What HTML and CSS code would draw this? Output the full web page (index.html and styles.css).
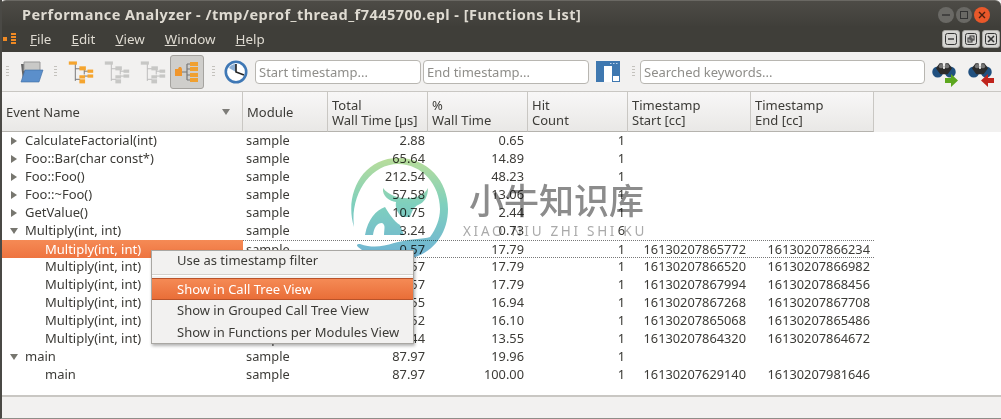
FILE: index.html
```html
<!DOCTYPE html>
<html lang="en">
<head>
  <meta charset="UTF-8" />
  <title>Performance Analyzer</title>
  <link rel="stylesheet" href="styles.css">
</head>
<body>

  <svg class="defs" width="0" height="0">
    <defs>
      <symbol id="tree" viewBox="0 0 32 32">
        <path d="M9 6V27M9 12H15M9 25H15M20 12V19M20 15H26M20 21H26" fill="none" stroke="currentColor" stroke-width="1.2" />
        <rect x="1" y="3" width="10" height="4" fill="var(--a)" />
        <rect x="14" y="9" width="8" height="5" fill="var(--a)" />
        <rect x="24" y="13" width="7" height="4" fill="var(--b)" />
        <rect x="24" y="19" width="7" height="4" fill="var(--b)" />
        <rect x="14" y="20" width="7" height="4" fill="var(--b)" />
        <rect x="14" y="25" width="7" height="5" fill="var(--a)" />
      </symbol>
      <symbol id="binoculars" viewBox="0 0 32 30">
        <circle cx="7.5" cy="15" r="7.5" fill="#20507f" />
        <circle cx="24.5" cy="15" r="7.5" fill="#20507f" />
        <path d="M5 10 10 3H14L15 11H17L18 3H22L27 10 21 18H11Z" fill="#2b2b2b" />
        <circle cx="12" cy="7" r="3" fill="#777" />
        <circle cx="20" cy="7" r="3" fill="#777" />
      </symbol>
    </defs>
  </svg>

  <div class="window">

    <div class="titlebar">
      <div class="title">Performance Analyzer - /tmp/eprof_thread_f7445700.epl - [Functions List]</div>
      <div class="wm-buttons">
        <span class="wm-btn"><svg width="10" height="10"><path d="M1 5H9" stroke="#333" stroke-width="1.4" /></svg></span>
        <span class="wm-btn"><svg width="10" height="10"><rect x="1.5" y="1.5" width="7" height="7" fill="none" stroke="#333" /></svg></span>
        <span class="wm-btn wm-close"><svg width="10" height="10"><path d="M2 2 8 8M8 2 2 8" stroke="#4a2010" stroke-width="1.4" /></svg></span>
      </div>
    </div>

    <div class="menubar">
      <svg class="app-icon" width="16" height="14">
        <rect x="2" y="5" width="4" height="4" fill="#f08a24" />
        <path d="M10 2H15M10 5H15M10 8H15M10 11H15" stroke="#f08a24" stroke-width="2" />
      </svg>
      <ul class="menu-list">
        <li><u>F</u>ile</li>
        <li><u>E</u>dit</li>
        <li><u>V</u>iew</li>
        <li><u>W</u>indow</li>
        <li><u>H</u>elp</li>
      </ul>
      <div class="mdi-buttons">
        <span class="mdi-btn"><svg width="12" height="12"><rect x=".5" y=".5" width="11" height="11" rx="2" fill="none" stroke="#333" /><path d="M3 6H9" stroke="#333" stroke-width="1.4" /></svg></span>
        <span class="mdi-btn"><svg width="12" height="12"><rect x=".5" y=".5" width="11" height="11" rx="2" fill="none" stroke="#333" /><rect x="5" y="3" width="4" height="4" fill="none" stroke="#333" /><rect x="3" y="5" width="4" height="4" fill="none" stroke="#333" /></svg></span>
        <span class="mdi-btn"><svg width="12" height="12"><rect x=".5" y=".5" width="11" height="11" rx="2" fill="none" stroke="#333" /><path d="M3 3 9 9M9 3 3 9" stroke="#333" stroke-width="1.6" /></svg></span>
      </div>
    </div>

    <div class="toolbar">
      <span class="grip grip-first"></span>
      <svg class="tool-open" width="26" height="22" viewBox="0 0 26 22">
        <path d="M3 3 5 20H9L7 3Z" fill="#666" />
        <path d="M6 1H22V10H6Z" fill="#c9c9c7" stroke="#999" />
        <path d="M7 9H25L21 21H3Z" fill="#5b8fcb" stroke="#3e6ca3" stroke-width=".6" />
      </svg>
      <span class="grip grip-open"></span>
      <svg class="tool-tree tool-t1" width="26" height="26"><use href="#tree" /></svg>
      <svg class="tool-tree tool-off tool-t2" width="26" height="26"><use href="#tree" /></svg>
      <svg class="tool-tree tool-off tool-t3" width="26" height="26"><use href="#tree" /></svg>
      <span class="tool-active">
        <svg width="26" height="24" viewBox="0 0 26 24">
          <path d="M8 12H13M13 4V20M13 4H16M13 9H16M13 15H16M13 20H16" fill="none" stroke="#777" stroke-width="1.2" />
          <path d="M1 9H4L5 7H7L8 9V16H1Z" fill="#f0962c" />
          <path d="M16 2H24V6H16ZM16 7H24V11H16ZM16 13H24V17H16ZM16 18H24V22H16Z" fill="#f0a030" />
        </svg>
      </span>
      <span class="grip grip-clock"></span>
      <svg class="tool-clock" width="24" height="24">
        <circle cx="12" cy="12" r="10.2" fill="#fff" stroke="#3f78b5" stroke-width="2.6" />
        <path d="M12 12V4A8 8 0 0 0 5 8Z" fill="#3f78b5" opacity=".6" />
        <path d="M12 4V12L20 15" fill="none" stroke="#222" stroke-width="1.6" />
      </svg>
      <input class="field field-start" placeholder="Start timestamp..." />
      <input class="field field-end" placeholder="End timestamp..." />
      <svg class="tool-window" width="24" height="21">
        <rect width="24" height="21" fill="#3f78b0" />
        <rect x="8" y="5" width="8" height="16" fill="#fff" />
        <rect x="17" y="15" width="6" height="5" fill="#fff" />
        <path d="M14 2.5H22" stroke="#bcd3ea" stroke-dasharray="1.5 1.5" />
      </svg>
      <span class="grip grip-search"></span>
      <input class="field field-search" placeholder="Searched keywords..." />
      <span class="find find-next">
        <svg width="24" height="22"><use href="#binoculars" /></svg>
        <svg class="find-arrow" width="13" height="13"><path d="M0 4H6V0L13 6.5 6 13V9H0Z" fill="#5da71f" /></svg>
      </span>
      <span class="find find-prev">
        <svg width="24" height="22"><use href="#binoculars" /></svg>
        <svg class="find-arrow" width="13" height="13"><path d="M13 4H7V0L0 6.5 7 13V9H13Z" fill="#c0241c" /></svg>
      </span>
    </div>

    <div class="table">
      <div class="head">
        <div class="hcell hcell-name">Event Name<span class="sort"></span></div>
        <div class="hcell hcell-name">Module</div>
        <div class="hcell">Total<br>Wall Time [µs]</div>
        <div class="hcell">%<br>Wall Time</div>
        <div class="hcell">Hit<br>Count</div>
        <div class="hcell">Timestamp<br>Start [cc]</div>
        <div class="hcell">Timestamp<br>End [cc]</div>
      </div>
      <div id="rows"></div>
    </div>

    <div class="statusbar"></div>

    <div class="watermark">
      <svg width="110" height="110" viewBox="0 0 110 110">
        <defs>
          <linearGradient id="wm" gradientUnits="userSpaceOnUse" x1="0" y1="3" x2="0" y2="105">
            <stop offset="0" stop-color="#b9dd9a" />
            <stop offset=".45" stop-color="#7fd0bd" />
            <stop offset="1" stop-color="#6fb2d6" />
          </linearGradient>
        </defs>
        <path fill="url(#wm)" fill-rule="evenodd" d="M14 72C4 40 22 3 58 3 88 3 108 26 108 54 108 84 86 105 58 105 42 105 28 100 18 92 16 90 17 89 20 89 32 93 42 92 54 88 68 84 84 84 90 82 96 74 100 64 100 54 100 30 82 9 58 9 30 9 10 40 14 72Z" />
        <path fill="url(#wm)" d="M43 33C42 42 50 46 56 47 55 52 57 58 62 62L70 62C72 56 74 52 78 50 84 48 88 42 88 33 84 40 78 42 72 43 62 44 50 42 43 33Z" />
        <path fill="url(#wm)" d="M25 80C28 64 36 55 45 52 50 60 54 66 60 70L64 80H44C44 74 46 70 42 68 36 68 34 74 33 80Z" />
      </svg>
      <div class="wm-text">
        <div class="wm-cn">小牛知识库</div>
        <div class="wm-en">XIAO NIU ZHI SHI KU</div>
      </div>
    </div>

    <div class="context-menu">
      <div class="cm-item cm-first">Use as timestamp filter</div>
      <div class="cm-sep"></div>
      <div class="cm-item cm-active">Show in Call Tree View</div>
      <div class="cm-item">Show in Grouped Call Tree View</div>
      <div class="cm-item">Show in Functions per Modules View</div>
    </div>

  </div>

  <script>
    // name, level (0 = closed, 1 = open, 2 = child), total, percent, hits, start, end
    const data = [
      ['CalculateFactorial(int)', 0, '2.88', '0.65', '1', '', ''],
      ['Foo::Bar(char const*)', 0, '65.64', '14.89', '1', '', ''],
      ['Foo::Foo()', 0, '212.54', '48.23', '1', '', ''],
      ['Foo::~Foo()', 0, '57.58', '13.06', '1', '', ''],
      ['GetValue()', 0, '10.75', '2.44', '1', '', ''],
      ['Multiply(int, int)', 1, '3.24', '0.73', '6', '', ''],
      ['Multiply(int, int)', 2, '0.57', '17.79', '1', '16130207865772', '16130207866234'],
      ['Multiply(int, int)', 2, '0.57', '17.79', '1', '16130207866520', '16130207866982'],
      ['Multiply(int, int)', 2, '0.57', '17.79', '1', '16130207867994', '16130207868456'],
      ['Multiply(int, int)', 2, '0.55', '16.94', '1', '16130207867268', '16130207867708'],
      ['Multiply(int, int)', 2, '0.52', '16.10', '1', '16130207865068', '16130207865486'],
      ['Multiply(int, int)', 2, '0.44', '13.55', '1', '16130207864320', '16130207864672'],
      ['main', 1, '87.97', '19.96', '1', '', ''],
      ['main', 2, '87.97', '100.00', '1', '16130207629140', '16130207981646']
    ];

    const rows = document.getElementById('rows');

    data.forEach(function(item, index) {
      const row = document.createElement('div');
      row.className = index === 6 ? 'row row-selected' : 'row';

      const name = document.createElement('div');
      name.className = 'cell cell-name level-' + item[1];
      name.textContent = item[0];
      row.appendChild(name);

      const module = document.createElement('div');
      module.className = 'cell cell-module';
      module.textContent = 'sample';
      row.appendChild(module);

      for (let i = 2; i < 7; i++) {
        const cell = document.createElement('div');
        cell.className = 'cell cell-num';
        cell.textContent = item[i];
        row.appendChild(cell);
      }

      rows.appendChild(row);
    });
  </script>

</body>
</html>
```

FILE: styles.css
```css
* {
  box-sizing: border-box;
}
body {
  margin: 0;
  background: #fff;
  font-family: "Noto Sans", "Open Sans", sans-serif;
  font-size: 13px;
  color: #3c3b37;
  overflow: hidden;
}
.defs {
  position: absolute;
}
.window {
  position: relative;
  width: 1001px;
  height: 419px;
  border-left: 2px solid #4a4945;
  border-bottom: 1px solid #8f8d88;
  background: #f2f1f0;
  overflow: hidden;
}

/* title bar */
.titlebar {
  display: flex;
  align-items: center;
  height: 26px;
  margin-left: -2px;
  padding-left: 22px;
  background: linear-gradient(#4d4b46, #403f3a);
  border-top: 1px solid #6a6863;
  border-radius: 6px 6px 0 0;
}
.title {
  color: #dfdbd2;
  font-size: 14.5px;
  font-weight: bold;
  letter-spacing: .47px;
  white-space: nowrap;
}
.wm-buttons {
  display: flex;
  gap: 2px;
  margin-left: auto;
  margin-right: 11px;
  margin-top: 3px;
}
.wm-btn {
  display: flex;
  align-items: center;
  justify-content: center;
  width: 16px;
  height: 16px;
  border-radius: 50%;
  background: #6a6965;
}
.wm-close {
  background: #e9582a;
}

/* menu bar */
.menubar {
  display: flex;
  align-items: center;
  height: 26px;
  margin-left: -2px;
  background: #3f3e39;
}
.app-icon {
  margin-left: 1px;
}
.menu-list {
  display: flex;
  list-style: none;
  gap: 20px;
  margin: 0 0 0 13px;
  padding: 0;
  color: #dfdbd2;
  font-size: 13.4px;
}
.mdi-buttons {
  display: flex;
  gap: 2px;
  margin-left: auto;
  margin-right: 1px;
}
.mdi-btn {
  display: flex;
  align-items: center;
  justify-content: center;
  width: 18px;
  height: 18px;
  border-radius: 3px;
  background: #d6d5d2;
  border: 1px solid #a9a8a4;
}

/* toolbar */
.toolbar {
  display: flex;
  align-items: center;
  height: 40px;
  border-bottom: 1px solid #c9c7c3;
  background: #f2f1f0;
}
.grip {
  width: 3px;
  height: 11px;
  background: repeating-linear-gradient(#c4c2bd 0 1px, transparent 1px 3px);
}
.grip-first { margin-left: 4px; }
.tool-open { margin-left: 9px; }
.grip-open { margin-left: 10px; }
.tool-tree { --a: #f5a52f; --b: #f5a52f; color: #777; }
.tool-off { --a: #c7c7c5; --b: #c7c7c5; color: #bbb; }
.tool-t1 { margin-left: 11px; }
.tool-t2 { margin-left: 10px; }
.tool-t3 { margin-left: 10px; }
.tool-active {
  display: flex;
  align-items: center;
  justify-content: center;
  width: 34px;
  height: 34px;
  margin-left: 4px;
  background: #cfcecb;
  border: 1px solid #a5a39f;
  border-radius: 3px;
}
.grip-clock { margin-left: 8px; }
.tool-clock { margin-left: 9px; }
.field {
  height: 24px;
  padding: 0 3px;
  border: 1px solid #b8b6b1;
  border-radius: 4px;
  background: #fff;
  font-family: inherit;
  font-size: 13px;
}
.field::placeholder {
  color: #8f8e8a;
  opacity: 1;
}
.field-start { width: 166px; margin-left: 7px; }
.field-end { width: 166px; margin-left: 2px; }
.tool-window { margin-left: 7px; }
.grip-search { margin-left: 12px; }
.field-search { width: 285px; margin-left: 5px; }
.find {
  position: relative;
  width: 24px;
  height: 22px;
}
.find-next { margin-left: 7px; }
.find-prev { margin-left: 12px; }
.find-arrow {
  position: absolute;
  right: -2px;
  bottom: -4px;
}

/* table */
.table {
  height: 305px;
  background: #fff;
  border-bottom: 2px solid #c9c7c3;
}
.head,
.row {
  display: grid;
  grid-template-columns: 241px 85px 100px 100px 100px 123px 123px;
}
.head {
  height: 40px;
  background: #f2f1f0;
}
.hcell {
  position: relative;
  padding: 6px 0 0 4px;
  line-height: 15px;
  background: linear-gradient(#f8f7f7, #e9e8e6);
  border-right: 1px solid #c9c7c3;
  border-bottom: 1px solid #b5b3ae;
}
.hcell-name {
  padding-top: 13px;
}
.sort {
  position: absolute;
  right: 12px;
  top: 17px;
  border-style: solid;
  border-width: 6px 4px 0;
  border-color: #7d7c78 transparent transparent;
}
.row {
  height: 18px;
  line-height: 17px;
}
.cell {
  white-space: nowrap;
}
.cell-name {
  position: relative;
}
.cell-module {
  padding-left: 3px;
  font-size: 12.8px;
}
.cell-num {
  padding-right: 3px;
  font-size: 12.8px;
  text-align: right;
}
.cell-num:nth-child(4) { padding-right: 4px; }
.cell-num:nth-child(6) { padding-right: 5px; }
.cell-num:nth-child(7) { padding-right: 4px; }
.level-0 { padding-left: 23px; }
.level-1 { padding-left: 23px; }
.level-2 { padding-left: 43px; }
.level-0::before,
.level-1::before {
  content: "";
  position: absolute;
  border-style: solid;
}
.level-0::before {
  left: 9px;
  top: 5px;
  border-width: 4px 0 4px 6px;
  border-color: transparent transparent transparent #77766f;
}
.level-1::before {
  left: 8px;
  top: 6px;
  border-width: 6px 4px 0;
  border-color: #77766f transparent transparent;
}
.row-selected {
  border-top: 1px dotted #777;
  border-bottom: 1px dotted #777;
  line-height: 16px;
  width: 872px;
}
.row-selected .cell-name {
  margin: -1px 0;
  line-height: 18px;
  background: linear-gradient(#f58a55, #ee7440);
  color: #fff;
}

/* overlays */
.watermark {
  position: absolute;
  left: 338px;
  top: 155px;
  display: flex;
  gap: 16px;
  mix-blend-mode: multiply;
  pointer-events: none;
}
.wm-text {
  margin-top: 23px;
  color: #8c8c8c;
  text-align: center;
}
.wm-cn {
  font-family: "Noto Sans CJK SC", sans-serif;
  font-size: 35px;
  font-weight: 500;
  line-height: 42px;
}
.wm-en {
  margin: 3px 0 0 -3px;
  font-size: 13.5px;
  line-height: 16px;
  letter-spacing: 2.7px;
  color: #aaa;
  white-space: nowrap;
}
.context-menu {
  position: absolute;
  left: 149px;
  top: 250px;
  width: 263px;
  height: 94px;
  background: #f2f1f0;
  border: 1px solid #a9a7a3;
  box-shadow: 1px 2px 3px rgba(0, 0, 0, .3);
}
.cm-item {
  height: 22px;
  padding-left: 25px;
  line-height: 21px;
  white-space: nowrap;
}
.cm-first {
  height: 20px;
  line-height: 18px;
}
.cm-sep {
  height: 2px;
  margin: 3px 0 2px;
  border-top: 1px solid #d4d2ce;
  border-bottom: 1px solid #fff;
}
.cm-active {
  line-height: 20px;
  background: linear-gradient(#f58a55, #e96e38);
  border-top: 1px solid #b9532a;
  border-bottom: 1px solid #b9532a;
  color: #fff;
}
```
